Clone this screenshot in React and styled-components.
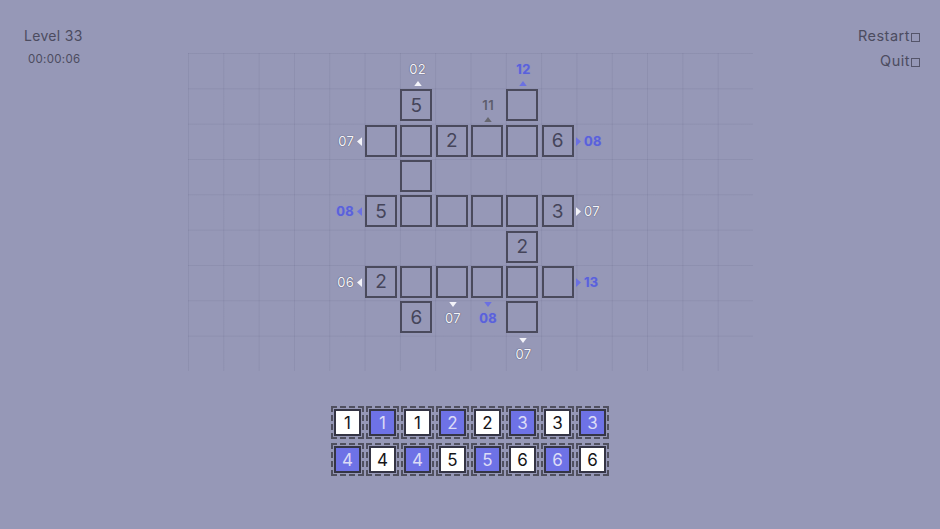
import React from 'react'
import styled, { createGlobalStyle } from 'styled-components'

const GlobalStyle = createGlobalStyle`
  html, body {
    margin: 0;
    padding: 0;
    background: #9698b7;
    font-family: "Inter", "Noto Sans", sans-serif;
  }
`

const CELL = 565 / 16
const ROW = 318 / 9

const board = {
  cells: [
    { r: 1, c: 6, v: '5' }, { r: 1, c: 9 },
    { r: 2, c: 5 }, { r: 2, c: 6 }, { r: 2, c: 7, v: '2' }, { r: 2, c: 8 }, { r: 2, c: 9 }, { r: 2, c: 10, v: '6' },
    { r: 3, c: 6 },
    { r: 4, c: 5, v: '5' }, { r: 4, c: 6 }, { r: 4, c: 7 }, { r: 4, c: 8 }, { r: 4, c: 9 }, { r: 4, c: 10, v: '3' },
    { r: 5, c: 9, v: '2' },
    { r: 6, c: 5, v: '2' }, { r: 6, c: 6 }, { r: 6, c: 7 }, { r: 6, c: 8 }, { r: 6, c: 9 }, { r: 6, c: 10 },
    { r: 7, c: 6, v: '6' }, { r: 7, c: 9 },
  ],
  clues: [
    { r: 0, c: 6, dir: 'up', v: '02', tone: 'white' },
    { r: 0, c: 9, dir: 'up', v: '12', tone: 'blue' },
    { r: 1, c: 8, dir: 'up', v: '11', tone: 'gray' },
    { r: 2, c: 4, dir: 'left', v: '07', tone: 'white' },
    { r: 2, c: 11, dir: 'right', v: '08', tone: 'blue' },
    { r: 4, c: 4, dir: 'left', v: '08', tone: 'blue' },
    { r: 4, c: 11, dir: 'right', v: '07', tone: 'white' },
    { r: 6, c: 4, dir: 'left', v: '06', tone: 'white' },
    { r: 6, c: 11, dir: 'right', v: '13', tone: 'blue' },
    { r: 7, c: 7, dir: 'down', v: '07', tone: 'white' },
    { r: 7, c: 8, dir: 'down', v: '08', tone: 'blue' },
    { r: 8, c: 9, dir: 'down', v: '07', tone: 'white' },
  ],
}

const tray = [
  ['1w', '1b', '1w', '2b', '2w', '3b', '3w', '3b'],
  ['4b', '4w', '4b', '5w', '5b', '6w', '6b', '6w'],
]

const tones = {
  white: { text: '#f4f4fa', arrow: '#f4f4fa', shadow: '0 0 1px #5a5a70, 0 0 1px #5a5a70', weight: 400 },
  blue: { text: '#5a61d9', arrow: '#6b70e2', shadow: '0 0 1px #7c80e8', weight: 700 },
  gray: { text: '#5d5d6c', arrow: '#66666f', shadow: 'none', weight: 600 },
}

const Page = styled.div`
  width: 940px;
  height: 529px;
  display: grid;
  grid-template-columns: 1fr 565px 1fr;
  grid-template-rows: 53px 318px 1fr;
  overflow: hidden;
`

const HudLeft = styled.div`
  grid-column: 1;
  grid-row: 1 / 3;
  padding: 27px 0 0 24px;
  display: flex;
  flex-direction: column;
  gap: 8px;
  color: #4c4c60;
`

const HudRight = styled.div`
  grid-column: 3;
  grid-row: 1 / 3;
  padding: 27px 20px 0 0;
  display: flex;
  flex-direction: column;
  align-items: flex-end;
  gap: 8px;
  color: #4c4c60;
`

const Title = styled.div`
  font-size: 14px;
  letter-spacing: 0.3px;
`

const Timer = styled.div`
  font-size: 11.5px;
  padding-left: 4px;
  letter-spacing: 0.3px;
`

const MenuItem = styled.div`
  font-size: 14.5px;
  display: flex;
  align-items: center;
  letter-spacing: 0.5px;
`

const Box = styled.span`
  width: 7px;
  height: 7px;
  border: 1px solid #55556a;
  margin-left: 1px;
  margin-top: 3px;
`

const Board = styled.div`
  grid-column: 2;
  grid-row: 2;
  display: grid;
  grid-template-columns: repeat(16, ${CELL}px);
  grid-template-rows: repeat(9, ${ROW}px);
  background-image:
    linear-gradient(to right, rgba(90, 92, 125, 0.14) 1px, transparent 1px),
    linear-gradient(to bottom, rgba(90, 92, 125, 0.14) 1px, transparent 1px);
  background-size: ${CELL}px ${ROW}px;
`

const Cell = styled.div`
  grid-row: ${p => p.$r + 1};
  grid-column: ${p => p.$c + 1};
  margin: 1px 0 0 1px;
  width: 32px;
  height: 32px;
  box-sizing: border-box;
  border: 2px solid #4a4a5c;
  display: flex;
  align-items: center;
  justify-content: center;
  font-size: 19px;
  color: #45455a;
`

const Clue = styled.div`
  grid-row: ${p => p.$r + 1};
  grid-column: ${p => p.$c + 1};
  display: flex;
  align-items: center;
  flex-direction: ${p => ({ up: 'column', down: 'column-reverse', left: 'row', right: 'row-reverse' }[p.$dir])};
  justify-content: flex-end;
  padding: ${p => ({ up: '0 0 2px 1px', down: '2px 0 0 1px', left: '0 2px 0 0', right: '0 0 0 0' }[p.$dir])};
  gap: ${p => (p.$dir === 'up' || p.$dir === 'down' ? '5px' : '3px')};
  box-sizing: border-box;
`

const ClueText = styled.span`
  font-size: 13px;
  line-height: 1;
  color: ${p => tones[p.$tone].text};
  text-shadow: ${p => tones[p.$tone].shadow};
  font-weight: ${p => tones[p.$tone].weight};
  letter-spacing: 0.3px;
`

const Arrow = ({ dir, color }) => {
  const pts = {
    up: '0,4 3,0 6,4',
    down: '0,0 6,0 3,4',
    left: '4,0 4,7 0,3.5',
    right: '0,0 0,7 4,3.5',
  }[dir]
  const vertical = dir === 'up' || dir === 'down'
  return (
    <svg width={vertical ? 8 : 5} height={vertical ? 5 : 9} viewBox={vertical ? '0 0 6 4' : '0 0 4 7'}>
      <polygon points={pts} fill={color} />
    </svg>
  )
}

const Tray = styled.div`
  grid-column: 1 / 4;
  grid-row: 3;
  padding-top: 35px;
  display: flex;
  flex-direction: column;
  align-items: center;
  gap: 4px;
`

const TrayRow = styled.div`
  display: flex;
  gap: 2px;
`

const Slot = styled.div`
  width: 33px;
  height: 33px;
  box-sizing: border-box;
  border: 2px dashed #50505f;
  display: flex;
  align-items: center;
  justify-content: center;
`

const Tile = styled.div`
  width: 27px;
  height: 27px;
  box-sizing: border-box;
  border: 2px solid #353545;
  background: ${p => (p.$blue ? '#6e72e6' : '#ffffff')};
  color: ${p => (p.$blue ? '#dcdcf6' : '#141418')};
  display: flex;
  align-items: center;
  justify-content: center;
  font-size: 17px;
`

export default function App() {
  return (
    <>
      <GlobalStyle />
      <Page>
        <HudLeft>
          <Title>Level 33</Title>
          <Timer>00:00:06</Timer>
        </HudLeft>
        <Board>
          {board.cells.map((cell, i) => (
            <Cell key={i} $r={cell.r} $c={cell.c}>{cell.v}</Cell>
          ))}
          {board.clues.map((clue, i) => (
            <Clue key={'c' + i} $r={clue.r} $c={clue.c} $dir={clue.dir}>
              <ClueText $tone={clue.tone}>{clue.v}</ClueText>
              <Arrow dir={clue.dir} color={tones[clue.tone].arrow} />
            </Clue>
          ))}
        </Board>
        <HudRight>
          <MenuItem>Restart<Box /></MenuItem>
          <MenuItem>Quit<Box /></MenuItem>
        </HudRight>
        <Tray>
          {tray.map((row, ri) => (
            <TrayRow key={ri}>
              {row.map((t, ti) => (
                <Slot key={ti}>
                  <Tile $blue={t[1] === 'b'}>{t[0]}</Tile>
                </Slot>
              ))}
            </TrayRow>
          ))}
        </Tray>
      </Page>
    </>
  )
}
